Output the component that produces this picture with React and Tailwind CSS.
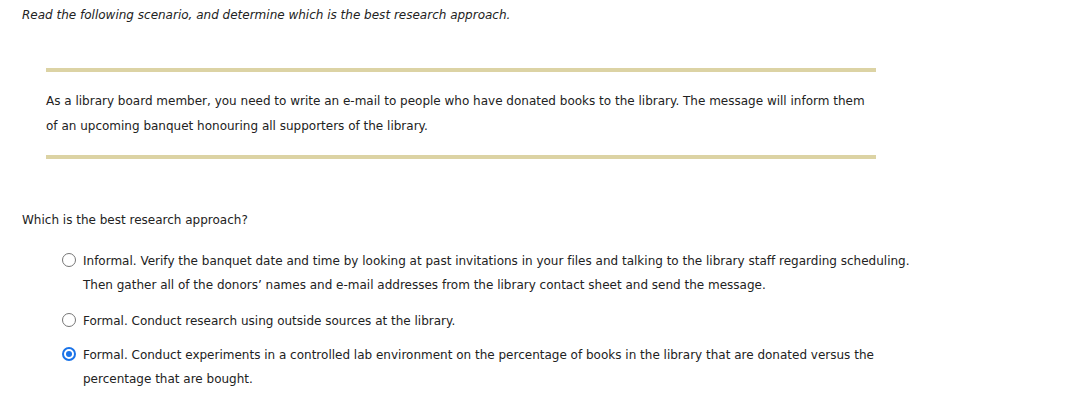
import React from 'react';

const options = [
  {
    id: 'a',
    lines: [
      'Informal. Verify the banquet date and time by looking at past invitations in your files and talking to the library staff regarding scheduling.',
      'Then gather all of the donors\u2019 names and e-mail addresses from the library contact sheet and send the message.',
    ],
    checked: false,
    space: '',
  },
  {
    id: 'b',
    lines: ['Formal. Conduct research using outside sources at the library.'],
    checked: false,
    space: 'mt-[12px]',
  },
  {
    id: 'c',
    lines: [
      'Formal. Conduct experiments in a controlled lab environment on the percentage of books in the library that are donated versus the',
      'percentage that are bought.',
    ],
    checked: true,
    space: 'mt-[10px]',
  },
];

function Radio({ checked }) {
  if (checked) {
    return (
      <span className="mt-[4px] flex h-[14px] w-[14px] shrink-0 items-center justify-center rounded-full border-[2px] border-[#1a73e8] bg-white">
        <span className="h-[6px] w-[6px] rounded-full bg-[#1a73e8]" />
      </span>
    );
  }
  return <span className="mt-[4px] block h-[14px] w-[14px] shrink-0 rounded-full border border-[#767676] bg-white" />;
}

export default function App() {
  return (
    <div className="min-h-[404px] bg-white pl-[22px] pt-[7px] text-[#222] [font-family:'DejaVu_Sans',Verdana,sans-serif] [font-variant-ligatures:none]">
      <p className="text-[12px] italic leading-[16px]">
        Read the following scenario, and determine which is the best research approach.
      </p>

      <div className="ml-[24px] mt-[45px] w-[830px]">
        <div className="h-[4px] bg-[#dcd3a4]" />
        <p className="pb-[16px] pt-[17px] text-[12px] leading-[25px]">
          As a library board member, you need to write an e-mail to people who have donated books to the library. The message will inform them
          <br />
          of an upcoming banquet honouring all supporters of the library.
        </p>
        <div className="h-[4px] bg-[#dcd3a4]" />
      </div>

      <p className="mt-[53px] text-[12px] leading-[16px]">Which is the best research approach?</p>

      <div className="mt-[21px] flex flex-col pl-[40px]">
        {options.map((opt) => (
          <label key={opt.id} className={`flex items-start gap-[7px] ${opt.space}`}>
            <Radio checked={opt.checked} />
            <span className="whitespace-nowrap text-[12px] leading-[24px]">
              {opt.lines.map((line, i) => (
                <span key={i} className="block">
                  {line}
                </span>
              ))}
            </span>
          </label>
        ))}
      </div>
    </div>
  );
}
